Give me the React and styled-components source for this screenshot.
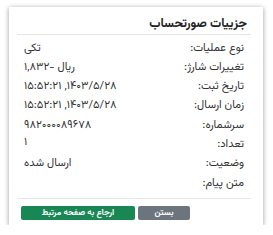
import React from 'react'
import styled, { createGlobalStyle } from 'styled-components'

const GlobalStyle = createGlobalStyle`
  html, body {
    margin: 0;
    padding: 0;
    background: #fff;
  }
  body {
    font-family: "Vazirmatn", "Noto Sans Arabic", "DejaVu Sans", sans-serif;
  }
`

const Page = styled.div`
  padding: 7px 10px 0 9px;
`

const Card = styled.div`
  width: 254px;
  height: 218px;
  box-sizing: border-box;
  background: #fff;
  direction: rtl;
  display: flex;
  flex-direction: column;
  box-shadow: 0 1px 5px rgba(0, 0, 0, 0.4);
`

const Header = styled.div`
  margin: 0 12px 0 8px;
  padding: 9px 4px 1px 0;
  border-bottom: 1px solid #e6e6e6;
`

const Title = styled.div`
  font-size: 12.5px;
  font-weight: bold;
  line-height: 17px;
  color: #222;
`

const Body = styled.div`
  flex: 1;
  margin: 0 12px 0 8px;
  padding: 3.4px 7px 5px 7px;
  border-bottom: 1px solid #e6e6e6;
`

const Row = styled.div`
  display: flex;
  justify-content: space-between;
  align-items: center;
  height: 19.3px;
  font-size: 11.2px;
  color: #333;
`

const Label = styled.span`
  white-space: nowrap;
`

const Value = styled.span`
  white-space: nowrap;
  position: relative;
  top: ${p => (p.$raised ? '-2px' : '0')};
`

const Amount = styled.span`
  direction: ltr;
  unicode-bidi: isolate;
`

const Footer = styled.div`
  display: flex;
  justify-content: flex-end;
  gap: 3px;
  padding: 7px 12px 5px;
`

const Button = styled.div`
  height: 14px;
  line-height: 14px;
  border-radius: 2px;
  color: #fff;
  font-size: 8.5px;
  font-weight: bold;
  text-align: center;
  width: ${p => (p.$variant === 'green' ? '114px' : '52px')};
  background: ${p => (p.$variant === 'green' ? '#198754' : '#6c757d')};
`

const rows = [
  { label: 'نوع عملیات:', value: 'تکی' },
  { label: 'تغییرات شارژ:', value: <>ریال <Amount>۱,۸۳۲-</Amount></> },
  { label: 'تاریخ ثبت:', value: '۱۴۰۳/۵/۲۸, ۱۵:۵۲:۲۱' },
  { label: 'زمان ارسال:', value: '۱۴۰۳/۵/۲۸, ۱۵:۵۲:۲۱' },
  { label: 'سرشماره:', value: '۹۸۲۰۰۰۰۸۹۶۷۸' },
  { label: 'تعداد:', value: '۱', raised: true },
  { label: 'وضعیت:', value: 'ارسال شده' },
  { label: 'متن پیام:', value: '' }
]

export default function App () {
  return (
    <Page>
      <GlobalStyle />
      <Card>
        <Header>
          <Title>جزییات صورتحساب</Title>
        </Header>
        <Body>
          {rows.map((row, i) => (
            <Row key={i}>
              <Label>{row.label}</Label>
              <Value $raised={row.raised}>{row.value}</Value>
            </Row>
          ))}
        </Body>
        <Footer>
          <Button $variant='grey'>بستن</Button>
          <Button $variant='green'>ارجاع به صفحه مرتبط</Button>
        </Footer>
      </Card>
    </Page>
  )
}
